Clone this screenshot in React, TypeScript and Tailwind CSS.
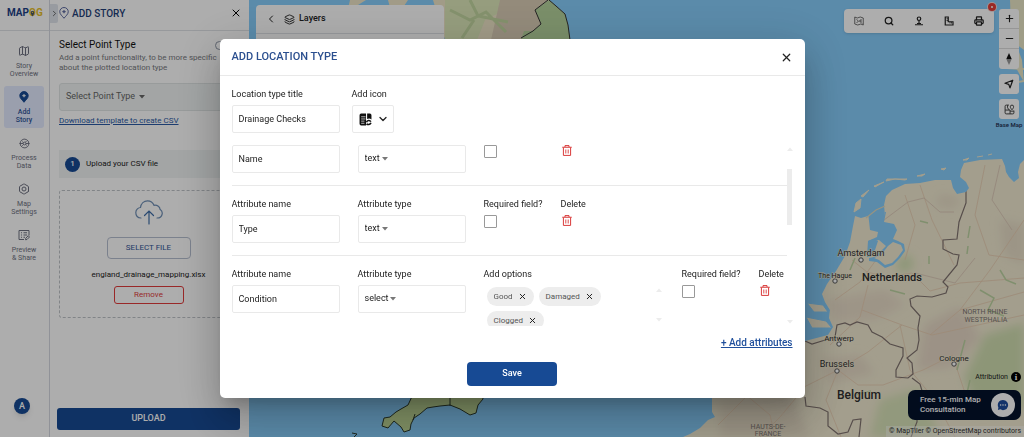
import React from "react";
import {
  Search,
  Printer,
  ChevronDown,
  ChevronLeft,
  ChevronRight,
  X,
  Plus,
  Minus,
  Layers,
  Map as MapIcon,
  Hexagon,
} from "lucide-react";

function CaretDown({ className = "" }: { className?: string }) {
  return (
    <svg viewBox="0 0 6 4" className={`h-[4px] w-[6px] ${className}`} aria-hidden="true">
      <path d="M0 0h6L3 3.6z" fill="currentColor" />
    </svg>
  );
}

function TrashIcon() {
  return (
    <svg viewBox="0 0 20 22" className="h-[11px] w-[10px]" fill="none" stroke="#d93a3a" strokeWidth="2" aria-hidden="true">
      <path d="M0.5 4.5h19M6 4V1.2h8V4M2.8 5v15.8h14.4V5" />
      <path d="M7.6 9v8M12.4 9v8" strokeWidth="1.8" />
    </svg>
  );
}

function PinIcon({ filled = false, className = "" }: { filled?: boolean; className?: string }) {
  return (
    <svg
      viewBox="0 0 20 24"
      className={className}
      fill={filled ? "#174a94" : "none"}
      stroke={filled ? "#174a94" : "#4c5a96"}
      strokeWidth="1.8"
      aria-hidden="true"
    >
      <path d="M10 22.5C7 18.500 1.500 14.500 1.500 9.500a8.500 8.500 0 0 1 17 0c0 5-5.500 9-8.500 13z" />
      <path d="M10 6.300l1.100 2.200 2.300.8-2.300.9L10 12.500l-1.100-2.300-2.300-.9 2.300-.8z" fill={filled ? "#fff" : "#4c5a96"} strokeWidth="1" stroke={filled ? "#fff" : "#4c5a96"} />
    </svg>
  );
}

function ProcessIcon() {
  return (
    <svg viewBox="0 0 24 24" className="size-[11px]" fill="none" stroke="currentColor" strokeWidth="2" aria-hidden="true">
      <path d="M6 4.500a9.500 9.500 0 0 1 15.500 7.500M18 19.500A9.500 9.500 0 0 1 2.500 12M6 4.500A9.500 9.500 0 0 0 2.500 12M18 19.500a9.500 9.500 0 0 0 3.500-7.500" />
      <circle cx="12" cy="12" r="3" />
      <path d="M1 12h8M15 12h8M7 8l3 2M14 14l3 2M14 9l3-3M10 14l-3 3" />
    </svg>
  );
}

function SettingsIcon() {
  return (
    <span className="relative flex">
      <Hexagon className="size-[12px]" strokeWidth={2} />
      <svg viewBox="0 0 12 12" className="absolute inset-0 size-[12px]" fill="none" stroke="currentColor" aria-hidden="true">
        <circle cx="6" cy="6" r="2" />
      </svg>
    </span>
  );
}

function PreviewIcon() {
  return (
    <svg viewBox="0 0 24 24" className="size-[12px]" fill="none" stroke="currentColor" strokeWidth="2" aria-hidden="true">
      <path d="M22 13V3H2v18h10" />
      <path d="M6 7.500h2M11 7.500h7M6 12h2M11 12h7M6 16.500h2M11 16.500h3" />
      <path d="M15 21.500l.5-3 5-5 2.500 2.500-5 5z" />
    </svg>
  );
}

const navItems = [
  { lines: ["Story", "Overview"], icon: <MapIcon className="size-[12px]" strokeWidth={2} /> },
  { lines: ["Add", "Story"], icon: <PinIcon filled className="h-[12px] w-[10px]" />, active: true },
  { lines: ["Process", "Data"], icon: <ProcessIcon /> },
  { lines: ["Map", "Settings"], icon: <SettingsIcon /> },
  { lines: ["Preview", "& Share"], icon: <PreviewIcon /> },
];

function Sidebar() {
  return (
    <nav className="flex w-[50px] shrink-0 flex-col border-r border-[#d4d8e0] bg-white">
      <div className="flex h-[31px] items-center border-b border-[#dfe2e6] pb-[4px] pl-[7px] text-[10px] font-bold leading-[12px]">
        <span className="text-[#1d4286]">MAP</span>
        <span className="relative text-[#e8bf2c]">
          OG
          <svg viewBox="0 0 8 10" className="absolute left-0 top-[1px] h-[10px] w-[7px]" aria-hidden="true">
            <path d="M4 9C3 7 2 6 2 4.300a2 2 0 0 1 4 0C6 6 5 7 4 9z" fill="#4b5a68" />
            <circle cx="4" cy="4.300" r=".8" fill="#f2cb3c" />
          </svg>
        </span>
      </div>
      <ul className="ml-1 mt-[9px] flex flex-col gap-1">
        {navItems.map((item) => (
          <li key={item.lines[1]}>
            <a
              href="#"
              className={`flex h-[42px] w-[40px] flex-col items-center justify-end rounded-[3px] pb-[4px] text-center text-[7px] leading-[8px] ${
                item.active ? "bg-[#e3eaff] font-medium text-[#2f5598]" : "text-[#6d7080]"
              }`}
            >
              <span className="mb-[5px] flex h-[12px] items-center">{item.icon}</span>
              <span>{item.lines[0]}</span>
              <span className="whitespace-nowrap">{item.lines[1]}</span>
            </a>
          </li>
        ))}
      </ul>
      <button className="mb-[23px] ml-[14px] mt-auto size-[16px] rounded-full bg-[#174a94] text-[9px] font-medium leading-[16px] text-white shadow-md">A</button>
    </nav>
  );
}

function StoryPanel() {
  return (
    <section className="flex w-[199px] shrink-0 flex-col bg-white">
      <header className="flex h-[31px] items-center border-b border-[#dfe2e6] pb-[4px] pr-[7px]">
        <button aria-label="Collapse" className="flex h-[19px] w-[8px] items-center justify-center rounded-r-[2px] bg-[#e1e5ec] text-[#444]">
          <ChevronRight className="size-[9px] shrink-0" />
        </button>
        <PinIcon className="ml-[1px] h-[12px] w-[10px]" />
        <h1 className="ml-[3px] text-[10px] font-medium text-[#1f3f78]">ADD STORY</h1>
        <button aria-label="Close panel" className="ml-auto">
          <X className="size-[12px] text-black" strokeWidth={2} />
        </button>
      </header>
      <div className="flex flex-1 flex-col pl-[9px] pr-[11px]">
        <div className="mt-[8px] flex items-center justify-between">
          <h2 className="text-[10px] leading-[12px] text-[#111]">Select Point Type</h2>
          <span className="mr-[14px] size-[9px] rounded-full border border-[#8d95a5]" />
        </div>
        <p className="mt-[2px] whitespace-nowrap text-[8px] leading-[10px] text-[#77797e]">
          Add a point functionality, to be more specific
          <br />
          about the plotted location type
        </p>
        <button className="mt-[10px] flex h-[28px] items-center gap-[4px] rounded-[3px] border border-[#e0e5e5] bg-[#f0f4f4] px-[6px] text-[9px] text-[#666]">
          Select Point Type <CaretDown />
        </button>
        <a href="#" className="mt-[4px] self-start text-[8px] leading-[12px] text-[#2b5ba6] underline">
          Download template to create CSV
        </a>
        <div className="mt-[23px] flex h-[28px] items-center bg-[#f0f4f4] pl-[6px] text-[8px] text-[#222]">
          <span className="mr-[6px] flex size-[15px] items-center justify-center rounded-full bg-[#174a94] text-[8px] font-medium text-white">1</span>
          Upload your CSV file
        </div>
        <div className="mt-[12px] flex h-[128px] flex-col items-center rounded-[3px] border border-dashed border-[#bfc3c8] pt-[9px]">
          <svg viewBox="0 0 28 26" className="h-[26px] w-[28px]" fill="none" stroke="#6e8eb5" strokeWidth="1.200" strokeLinecap="round" aria-hidden="true">
            <path d="M6 18C2 18 .8 15 .8 12.500 .8 9.500 3.500 7.500 5.500 7.500 6 3.500 9 .8 12.500.8c3 0 5.500 2 6.500 4.500 3.500-.5 6 1.700 6 4 1.500 1 2.500 2.500 2.200 4.500-.4 2.700-2.500 4.200-5.200 4.200" />
            <path d="M14 24V11M9.500 15.500L14 11l4.500 4.500" stroke="#3f6ea8" />
          </svg>
          <button className="mt-[11px] h-[22px] w-[84px] rounded-[4px] border border-[#b6bfd0] text-[8px] text-[#2f5598]">SELECT FILE</button>
          <span className="mt-[10px] text-[8px] leading-[12px] text-[#222]">england_drainage_mapping.xlsx</span>
          <button className="mt-[5px] h-[18px] w-[70px] shrink-0 rounded-[3px] border border-[#e23c3c] text-[8px] leading-[10px] text-[#e23c3c]">Remove</button>
        </div>
        <button className="-mx-[2px] mb-[7px] mt-auto h-[22px] rounded-[3px] bg-[#174a94] text-[9px] font-medium text-white">UPLOAD</button>
      </div>
    </section>
  );
}

function MapCanvas() {
  return (
    <svg
      viewBox="249 0 775 437"
      preserveAspectRatio="xMaxYMid slice"
      className="absolute inset-0 size-full font-['Roboto',sans-serif]"
      role="img"
      aria-label="Map of the North Sea"
    >
      <defs>
        <filter id="soft" x="-30%" y="-30%" width="160%" height="160%">
          <feGaussianBlur stdDeviation="5" />
        </filter>
        <clipPath id="mainland">
          <path d="M712 380V412L715 417 708 420 700 428 690 434 683 437H1024V160L1020 164 1018 172 1019 178 1014 182 1009 177 1006 172 1005 166 1002 159 980 160 964 163 961 170 960 177 966 182 969 188 966 192 957 194 953 188 951 180 935 180 920 183 905 184 892 190 886 196 884 205 885 216H868L861 218 855 216 853 226 850 242 845 256 836 271 827 284 822 294 825 302 830 310 829 318 833 327 828 335 805 341z" />
        </clipPath>
      </defs>
      <rect x="249" width="775" height="437" fill="#86cdfb" />

      <path d="M350 0h16l-8 5-6 8h-5zM388 0h20l-6 9-10 6zM433 0H549L556 6 565 14 568 25 570 40H445z" fill="#eee5c8" />
      <path d="M445 0h60l-8 14-12 6-8 20h-32z" fill="#dde8ba" />
      <path d="M500 0h48l-13 10 6 14-8 7-12 9h-30z" fill="#dacdb6" />
      <path d="M549 0L556 6 565 14 568 25 570 40H521L524 31 533 31 541 24 535 10z" fill="#b5d39c" />
      <path d="M548 0L535 10 541 24 533 31 521 38M549 0L556 6 565 14 568 25 570 40" fill="none" stroke="#333" strokeWidth="1" />
      <path d="M450 10l20 10 16-8 20 20M470 0l8 16 30 6M462 38l12-18" fill="none" stroke="#c3d7a1" strokeWidth="3" />

      <path
        d="M415 390L408 405 401 409 396 412 390 417 384 418 382 426 388 428 394 421 401 427 404 432 410 430 411 424 414 418 420 414 427 408 433 407 440 406 450 405 460 409 465 412 470 415 476 413 478 405 483 399 482 390z"
        fill="#bfd795"
        stroke="#2c3a2c"
        strokeWidth="1"
      />
      <path d="M450 390v16M415 414l-2 6" stroke="#2c3a2c" />
      <path d="M352 433l5 1-3 3" stroke="#2c3a2c" fill="none" />

      <g clipPath="url(#mainland)">
        <rect x="680" y="150" width="344" height="287" fill="#f0e9d0" />
        <g filter="url(#soft)">
          <path d="M985 335l39-12v85l-45 5-15-35z" fill="#d0deb0" />
          <path d="M880 400l40-12 20 49h-70z" fill="#d8e2b8" />
          <path d="M896 262l14-8 4 14-14 5z" fill="#d0dfb0" />
          <path d="M925 325l35-18 20 30-28 30-35 3z" fill="#e6d8c6" />
          <path d="M825 300l60-10 20 15-30 15-40 2z" fill="#e8dcc8" />
          <path d="M820 360l40-5 14 18-44 10z" fill="#e6dac6" />
          <path d="M720 400l70-6 20 43h-90z" fill="#e6dcc6" />
          <path d="M1000 220l24 5v40l-20-10zM940 195l20 3-6 10-18-3z" fill="#e6dcc6" />
        </g>
        <g fill="none" stroke="#e7cbb0" strokeWidth=".8">
          <path d="M852 260l15 12 20 5 25-4 18 18 30-8 64-5M835 300l25-18 16-22M830 345l30-28 8-32M862 310l40 15 30 10 92-20M838 370l30-18 34-27M838 370l20 15 25 0 40-15 30-15M838 370l-12 30 15 37M838 370l-40 20-50 5-30 30M900 325l10 45 25 30 20 37M954 360l10 30 30 20M930 335l30-25 30-40 34-50M960 310l64-18M905 195l10 30-10 35M920 185l12 35 22 45M985 165l-10 50 14 40 35 5M740 390l30 25 5 22M760 437l20-20 25-30" />
          <path d="M884 220l24-18 16-4 16 14 14 0M1000 165l-8 35 20 30M915 273l40 10 20-25" stroke="#d9c4b4" />
        </g>
        <g fill="none" stroke="#bdd3a2" strokeWidth="1.500">
          <path d="M850 270l5-12M890 290l15 4M980 290l14 8-6 12 16 6M965 340l-8 30M970 226l-2 12M968 246l-1 8M920 221l8 2M1000 270l6 10 10 4M970 380l-6 26M855 395l16-4M929 256v8" />
        </g>
        <path
          d="M868 212L886 212 884 222 894 224 897 230 893 239 898 241 904 244 905 251 900 258 893 265 885 268 877 262 869 261 869 258 874 257 880 252 886 246 879 240 868 242 868 241 877 237 878 232 870 230z"
          fill="#86cdfb"
        />
        <path d="M868 241L874 239 878 241 875 250 870 257 867 257z" fill="#86cdfb" />
        <path d="M874 258L881 255 888 246 893 242 901 245 903 250 898 257 892 263 885 265 879 260z" fill="#f0e9d0" />
        <path d="M805 341L812 344 822 341 835 337 837 325 845 323 850 325 857 322 868 325 872 332 882 337 890 344 903 348 903 356 896 370 896 377 908 378 913 374 912 363 907 358 917 350 919 340 918 328 920 316 911 306 910 299 917 296 932 297 946 293 948 287 943 282 957 265 959 255 953 254 943 249 943 240 957 239 959 222 966 203 966 190" fill="none" stroke="#80736f" strokeWidth="1.200" />
        <path d="M805 397L806 406 820 408 828 412 828 426 838 434 848 432 853 420 861 419 859 437M912 378l8 6 3 10-6 14 0 14-6 15" fill="none" stroke="#80736f" strokeWidth="1.200" />
      </g>
      <path d="M807 303l16 2 5 7-14 0zM806 317l20 4 6 7-20 0z" fill="#f0e9d0" stroke="#86cdfb" />
      <path d="M854 212l2-9 5-4-1 9zM861 196l8-6-6 7zM874 186l10-4-2 1-7 4zM886 181l9-2h-8zM895 179l12 0-2 1zM917 176l8-2-3 2zM941 169l5-1-2 2zM963 160l6-2-2 2zM977 157l6-1M988 155l4-1" fill="#f0e9d0" stroke="#f0e9d0" strokeWidth="1" />
      <path d="M866 218l10-8 9-4" stroke="#e0d9bd" strokeWidth="1.200" fill="none" />

      <path d="M1010 0h14v50l-8-6 6 16 2 22-8-14 3-8-8-30z" fill="#eae7c8" />
      <path d="M1006 68l18 1M1018 82l6-1" stroke="#eae7c8" strokeWidth="2" />

      <g fill="#fff" stroke="#555" strokeWidth="1">
        <circle cx="861" cy="260" r="2.200" />
        <circle cx="835" cy="281" r="2.200" />
        <circle cx="839" cy="344" r="2.200" />
        <circle cx="837" cy="371" r="2.200" />
        <circle cx="954" cy="364" r="2.200" />
      </g>
      <g fill="#2e2e2e" textAnchor="middle" stroke="#f0e9d0" strokeWidth="1" paintOrder="stroke">
        <text x="861" y="256" fontSize="9">Amsterdam</text>
        <text x="835" y="278" fontSize="7">The Hague</text>
        <text x="892" y="281" fontSize="11" fontWeight="500">Netherlands</text>
        <text x="839" y="341" fontSize="8">Antwerp</text>
        <text x="837" y="367" fontSize="9">Brussels</text>
        <text x="859" y="399" fontSize="12" fontWeight="500">Belgium</text>
        <text x="954" y="361" fontSize="8">Cologne</text>
      </g>
      <g fill="#7e7672" textAnchor="middle" fontSize="7">
        <text x="985" y="314">NORTH RHINE</text>
        <text x="986" y="322">WESTPHALIA</text>
        <text x="768" y="429">HAUTS-DE-</text>
        <text x="768" y="436">FRANCE</text>
      </g>
    </svg>
  );
}

function StreetViewIcon() {
  return (
    <svg viewBox="0 0 20 20" className="size-[10px]" fill="none" stroke="currentColor" strokeWidth="2.400" aria-hidden="true">
      <circle cx="10" cy="5.500" r="3.500" />
      <path d="M10 9v7M2 17.500h16M6 15h8" />
    </svg>
  );
}

function RulerIcon() {
  return (
    <svg viewBox="0 0 20 20" className="size-[10px]" fill="none" stroke="currentColor" strokeWidth="2.400" aria-hidden="true">
      <path d="M2.500 2h6v9.500H18V18H2.500z" />
      <path d="M5 5.500h3M5 9h3M12 12v3M15 12v3" strokeWidth="1.500" />
    </svg>
  );
}

function SelectAreaIcon() {
  return (
    <svg viewBox="0 0 20 20" className="size-[10px]" fill="none" stroke="#444" strokeWidth="1.500" aria-hidden="true">
      <path d="M1.500 2l5 2 6-2 6 2v14l-5-2-6 2-6-2z" />
      <path d="M5 7l4 3-4 4M15 6l-4 4 5 5M11 10h5" />
    </svg>
  );
}

const tools = [
  { name: "Select area", icon: <SelectAreaIcon /> },
  { name: "Search", icon: <Search className="size-[10px]" strokeWidth={3} /> },
  { name: "Street view", icon: <StreetViewIcon /> },
  { name: "Measure", icon: <RulerIcon /> },
  { name: "Print", icon: <Printer className="size-[10px]" strokeWidth={3} /> },
];

function MapArea() {
  return (
    <main className="relative flex-1 overflow-hidden">
      <MapCanvas />
      <div className="absolute left-[7px] top-[5px] h-[120px] w-[188px] rounded-[4px] bg-white">
        <div className="flex h-[29px] items-center border-b border-[#dfe2e6] pl-[9px]">
          <ChevronLeft className="size-[12px] text-[#222]" />
          <Layers className="ml-[7px] size-[11px] text-[#222]" />
          <h2 className="ml-[4px] text-[9px] font-medium text-[#222]">Layers</h2>
        </div>
      </div>
      <div className="absolute right-[30px] top-[9px] flex h-[24px] w-[150px] rounded-[4px] bg-white text-[#222] shadow">
        {tools.map((tool) => (
          <button key={tool.name} aria-label={tool.name} className="flex flex-1 items-center justify-center">
            {tool.icon}
          </button>
        ))}
        <button aria-label="Close tools" className="absolute -right-[3px] -top-[7px] flex size-[10px] items-center justify-center rounded-full bg-[#f0d8d8]">
          <span className="flex size-[8px] items-center justify-center rounded-full bg-[#e43d36]">
            <span className="size-[2px] rounded-full bg-white" />
          </span>
        </button>
      </div>
      <div className="absolute right-[5px] top-[9px] flex w-[20px] flex-col gap-[5px] text-[#222]">
        <div className="flex flex-col divide-y divide-[#ddd] rounded-[3px] bg-white">
          <button aria-label="Zoom in" className="flex h-[20px] items-center justify-center"><Plus className="size-[11px]" strokeWidth={2.5} /></button>
          <button aria-label="Zoom out" className="flex h-[20px] items-center justify-center"><Minus className="size-[11px]" strokeWidth={2.5} /></button>
          <button aria-label="Reset north" className="flex h-[20px] items-center justify-center">
            <svg viewBox="0 0 10 20" className="h-[12px] w-[6px]" aria-hidden="true">
              <path d="M5 0l4.500 10h-9z" fill="#111" />
              <path d="M5 20L.5 10h9z" fill="#999" />
            </svg>
          </button>
        </div>
        <button aria-label="Locate me" className="flex h-[20px] items-center justify-center rounded-[3px] bg-white">
          <svg viewBox="0 0 20 20" className="size-[10px]" fill="none" stroke="currentColor" strokeWidth="2.500" strokeLinejoin="round" aria-hidden="true">
            <path d="M17.500 2.500L2 8.500l7.500 2.200 2.500 7z" />
          </svg>
        </button>
        <button className="flex flex-col items-center">
          <span className="flex size-[20px] items-center justify-center rounded-[3px] bg-white">
            <svg viewBox="0 0 20 20" className="size-[11px]" fill="none" stroke="#444" strokeWidth="1.800" aria-hidden="true">
              <path d="M9 2H4a2 2 0 0 0-2 2v12a2 2 0 0 0 2 2h12a2 2 0 0 0 2-2v-4M2 11h9v7M11 13h7M6.500 2v5l3 4" />
              <path d="M14.500 10.500c-2-2.500-3-3.800-3-5.500a3 3 0 0 1 6 0c0 1.700-1 3-3 5.500z" />
            </svg>
          </span>
          <span className="mt-[2px] whitespace-nowrap text-[6px] font-medium leading-[8px] text-[#1c2b4a]">Base Map</span>
        </button>
      </div>
      <div className="absolute bottom-0 right-0 flex flex-col items-end">
        <div className="flex items-center gap-[3px] pr-[3px] text-[7px] leading-[10px] text-[#222]">
          Attribution
          <span className="flex size-[10px] items-center justify-center rounded-full bg-black font-['Liberation_Serif',serif] text-[9px] font-bold text-white">i</span>
        </div>
        <button className="mr-[3px] mt-[8px] flex h-[30px] w-[113px] items-center justify-between rounded-[7px] bg-[#04122c] pl-[12px] pr-[6px] text-left text-[8px] font-medium leading-[10px] text-white">
          <span className="whitespace-nowrap">
            Free 15-min Map
            <br />
            Consultation
          </span>
          <span className="flex size-[24px] shrink-0 items-center justify-center rounded-full bg-white">
            <svg viewBox="0 0 20 20" className="size-[12px]" aria-hidden="true">
              <path d="M10 1.500a8.500 8.500 0 1 1-4.500 15.700L1.500 18.500l.8-4.500A8.500 8.500 0 0 1 10 1.500z" fill="#1d4c9c" />
              <g fill="#fff">
                <circle cx="6" cy="10" r="1.300" />
                <circle cx="10" cy="10" r="1.300" />
                <circle cx="14" cy="10" r="1.300" />
              </g>
            </svg>
          </span>
        </button>
        <div className="mt-[6px] bg-white/40 px-[3px] text-[7px] leading-[11px] text-[#333]">© MapTiler © OpenStreetMap contributors</div>
      </div>
    </main>
  );
}

const inputClass =
  "h-[28px] w-[108px] rounded-[2px] border border-[#e9e9e9] bg-white px-[6px] text-[9px] text-[#222] outline-none";

function Field({ id, label, children, className = "" }: { id: string; label?: string; children: React.ReactNode; className?: string }) {
  return (
    <div className={`flex shrink-0 flex-col items-start ${className}`}>
      {label && (
        <label htmlFor={id} className="mb-[5px] whitespace-nowrap text-[9px] leading-[12px] text-[#222]">
          {label}
        </label>
      )}
      {children}
    </div>
  );
}

interface Attribute {
  name: string;
  type: string;
  options?: string[];
  labelled: boolean;
}

const attributes: Attribute[] = [
  { name: "Name", type: "text", labelled: false },
  { name: "Type", type: "text", labelled: true },
  { name: "Condition", type: "select", options: ["Good", "Damaged", "Clogged"], labelled: true },
];

function AttributeRow({ attribute }: { attribute: Attribute }) {
  const { name, type, options, labelled } = attribute;
  const label = (text: string) => (labelled ? text : undefined);
  return (
    <div className="flex items-start gap-[18px] border-b border-[#e9e9e9] pb-[12px] last:border-0 last:pb-0">
      <Field id={`${name}-name`} label={label("Attribute name")}>
        <input id={`${name}-name`} aria-label="Attribute name" defaultValue={name} className={inputClass} />
      </Field>
      <Field id={`${name}-type`} label={label("Attribute type")} className="relative">
        <select id={`${name}-type`} aria-label="Attribute type" defaultValue={type} className={`${inputClass} appearance-none`}>
          <option>text</option>
          <option>select</option>
        </select>
        <span className={`pointer-events-none absolute bottom-[12px] text-[#777] ${type === "text" ? "left-[24px]" : "left-[32px]"}`}>
          <CaretDown />
        </span>
      </Field>
      {options && (
        <Field id={`${name}-options`} label="Add options" className="w-[180px]">
          <div id={`${name}-options`} className="-mt-[3px] flex w-full justify-between">
            <ul className="flex w-[130px] flex-wrap gap-[5px] pl-[3px] pt-[5px]">
              {options.map((option) => (
                <li key={option} className="flex h-[19px] items-center gap-[5px] rounded-full bg-[#ededed] px-[7px] text-[8px] text-[#555]">
                  {option}
                  <button aria-label={`Remove ${option}`}>
                    <X className="size-[9px] text-[#222]" strokeWidth={2.6} />
                  </button>
                </li>
              ))}
            </ul>
            <div className="flex h-[40px] flex-col items-center justify-between pr-[2px] pt-[6px] text-[#ececec]">
              <CaretDown className="rotate-180" />
              <CaretDown />
            </div>
          </div>
        </Field>
      )}
      <Field id={`${name}-required`} label={label("Required field?")} className="w-[59px]">
        <input
          id={`${name}-required`}
          type="checkbox"
          aria-label="Required field?"
          className="size-[13px] appearance-none rounded-[1px] border border-[#999] bg-white checked:bg-[#174a94]"
        />
      </Field>
      <Field id={`${name}-delete`} label={label("Delete")}>
        <button id={`${name}-delete`} aria-label="Delete" className="ml-[1px] block">
          <TrashIcon />
        </button>
      </Field>
    </div>
  );
}

function LocationTypeDialog() {
  return (
    <div className="fixed inset-0 flex items-center justify-center bg-black/32">
      <div
        role="dialog"
        aria-label="Add location type"
        className="w-full max-w-[585px] rounded-[5px] bg-white pb-[12px] shadow-[0_11px_15px_-7px_rgba(0,0,0,0.2),0_24px_38px_3px_rgba(0,0,0,0.14),0_9px_46px_8px_rgba(0,0,0,0.12)]"
      >
        <header className="flex h-[37px] items-center justify-between border-b border-[#e9e9e9] px-[12px]">
          <h2 className="text-[11px] font-medium text-[#2b4f8f]">ADD LOCATION TYPE</h2>
          <button aria-label="Close dialog">
            <X className="size-[13px] text-[#222]" strokeWidth={2.2} />
          </button>
        </header>
        <div className="flex flex-col px-[12px] pt-[12px]">
          <div className="flex items-start gap-[12px]">
            <Field id="location-title" label="Location type title">
              <input id="location-title" defaultValue="Drainage Checks" className={inputClass} />
            </Field>
            <Field id="location-icon" label="Add icon">
              <button id="location-icon" className="flex h-[28px] w-[42px] items-center gap-[5px] rounded-[2px] border border-[#e9e9e9] pl-[6px]">
                <svg viewBox="0 0 24 24" className="size-[13px] shrink-0" aria-hidden="true">
                  <path d="M4 1h9v22H4a3 3 0 0 1-3-3V4a3 3 0 0 1 3-3zM15 1h5a3 3 0 0 1 3 3v8c-3-3-6-2-8-1z" fill="#111" />
                  <path d="M4 7h8M4 11h8M4 15h6M4 19h6" stroke="#fff" strokeWidth="1.300" />
                  <path d="M14 17c1-4 6-4 8-1M22 18c-1 4-6 4-8 2" fill="none" stroke="#111" strokeWidth="3" />
                </svg>
                <ChevronDown className="size-[12px] shrink-0 text-[#222]" strokeWidth={2.6} />
              </button>
            </Field>
          </div>
          <div className="mt-[12px] flex h-[181px] items-start overflow-hidden">
            <div className="flex min-w-0 flex-1 flex-col gap-[12px]">
              {attributes.map((attribute) => (
                <AttributeRow key={attribute.name} attribute={attribute} />
              ))}
            </div>
            <div className="flex h-full w-[6px] flex-col items-center pb-[2px] pt-[2px] text-[#ececec]">
              <CaretDown className="rotate-180" />
              <div className="mt-[18px] h-[56px] w-[5px] bg-[#ececec]" />
              <CaretDown className="mt-auto" />
            </div>
          </div>
          <a href="#" className="mt-[10px] self-end text-[10px] font-medium leading-[14px] text-[#1f4f9c] underline">
            + Add attributes
          </a>
          <button className="mt-[12px] h-[24px] w-[90px] self-center rounded-[4px] bg-[#174a94] text-[9px] font-medium text-white">Save</button>
        </div>
      </div>
    </div>
  );
}

export default function App() {
  return (
    <div className="flex h-screen overflow-hidden font-['Roboto',sans-serif]">
      <Sidebar />
      <StoryPanel />
      <MapArea />
      <LocationTypeDialog />
    </div>
  );
}
